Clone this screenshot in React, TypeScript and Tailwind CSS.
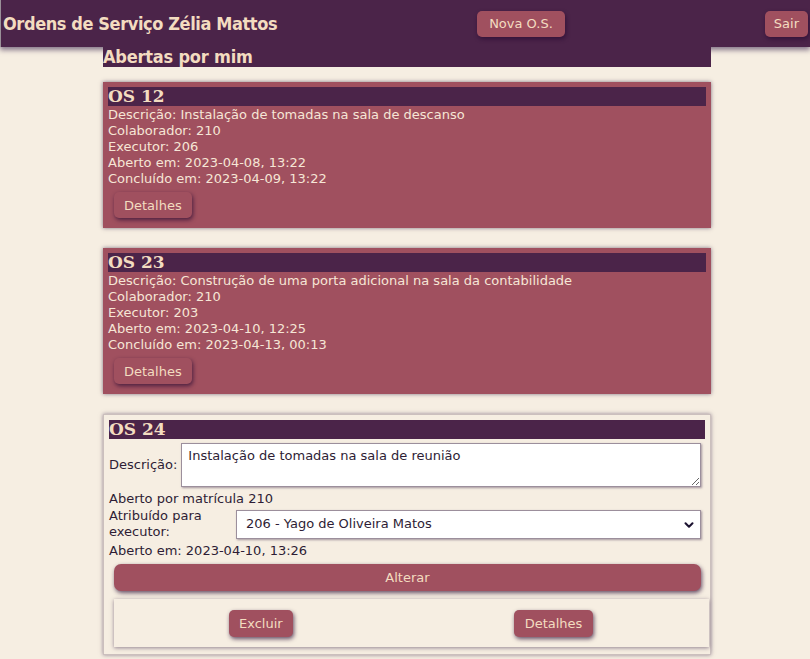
import { ChevronDown } from "lucide-react";

const closed = [
    {
        id: 12,
        descricao: "Instalação de tomadas na sala de descanso",
        colaborador: 210,
        executor: 206,
        aberto: "2023-04-08, 13:22",
        concluido: "2023-04-09, 13:22"
    },
    {
        id: 23,
        descricao: "Construção de uma porta adicional na sala da contabilidade",
        colaborador: 210,
        executor: 203,
        aberto: "2023-04-10, 12:25",
        concluido: "2023-04-13, 00:13"
    }
];

const btn =
    "bg-[#a0505f] text-[#f3dcc0] rounded-[5px] shadow-[1px_2px_4px_rgba(40,10,50,0.7)] text-[13px] leading-none";

const narrow = "font-['DejaVu_Sans_Condensed','DejaVu_Sans',sans-serif] font-bold";

export default function App() {
    return (
        <div className="min-h-[659px] bg-[#f6eee2] font-['DejaVu_Sans',Verdana,sans-serif] text-[13px] leading-4">
            <header className="h-[47px] bg-[#4b2449] flex items-center justify-between px-[2px] border-l border-[#9a9098] shadow-[0_3px_5px_rgba(60,40,80,0.6)] relative z-10">
                <h1 className={`${narrow} text-[18px] tracking-[-0.4px] text-[#f3dcc0]`}>Ordens de Serviço Zélia Mattos</h1>
                <button className={`${btn} h-[26px] px-[12px]`}>Nova O.S.</button>
                <button className={`${btn} h-[26px] px-[9px]`}>Sair</button>
            </header>

            <main className="w-[608px] ml-[103px] relative z-20">
                <h2 className={`${narrow} bg-[#4b2449] text-[#f3dcc0] text-[18px] tracking-[-0.2px] leading-5 h-5`}>Abertas por mim</h2>

                <div className="flex flex-col gap-5 mt-[15px]">
                    {closed.map((os) => (
                        <div
                            key={os.id}
                            className="bg-[#a0505f] text-[#f6e6d6] px-[5px] pt-[5px] pb-[10px] shadow-[0_0_4px_rgba(80,60,90,0.7)]"
                        >
                            <div className="bg-[#4b2449] h-[19px] font-['DejaVu_Serif',Georgia,serif] font-bold text-[17px] leading-[19px] text-[#f3dcc0]">
                                OS {os.id}
                            </div>
                            <div className="pt-px">
                                <p>Descrição: {os.descricao}</p>
                                <p>Colaborador: {os.colaborador}</p>
                                <p>Executor: {os.executor}</p>
                                <p>Aberto em: {os.aberto}</p>
                                <p>Concluído em: {os.concluido}</p>
                            </div>
                            <button className={`${btn} h-[26px] px-[10px] ml-[6px] mt-[5px]`}>Detalhes</button>
                        </div>
                    ))}

                    <div className="bg-[#f6eee2] text-[#2e1d35] px-[5px] pt-[5px] pb-[7px] border border-[#cbbfbd] shadow-[0_0_4px_rgba(80,60,90,0.6)]">
                        <div className="bg-[#4b2449] h-[19px] font-['DejaVu_Serif',Georgia,serif] font-bold text-[17px] leading-[19px] text-[#f3dcc0]">
                            OS 24
                        </div>
                        <div className="flex items-center gap-1 mt-1">
                            <span>Descrição:</span>
                            <textarea
                                className="flex-1 h-[44px] bg-white border border-[#9c8f9c] shadow-[1px_1px_2px_rgba(80,60,90,0.5)] px-[6px] py-[4px] text-[13px] leading-4 text-[#2e1d35] mr-[4px] resize-y"
                                defaultValue="Instalação de tomadas na sala de reunião"
                            />
                        </div>
                        <p className="mt-[4px]">Aberto por matrícula 210</p>
                        <div className="flex items-center mt-[1px]">
                            <span className="w-[127px]">Atribuído para executor:</span>
                            <div className="relative flex-1 mr-[4px]">
                                <div className="h-[29px] bg-white border border-[#9c8f9c] shadow-[1px_1px_2px_rgba(80,60,90,0.5)] flex items-center pl-[9px]">
                                    206 - Yago de Oliveira Matos
                                </div>
                                <ChevronDown size={14} strokeWidth={3.5} className="absolute right-[5px] top-[8px] text-[#1c1230]" />
                            </div>
                        </div>
                        <p className="mt-[3px]">Aberto em: 2023-04-10, 13:26</p>
                        <button className={`${btn} w-[587px] h-[27px] ml-[5px] mt-[5px] rounded-[7px]`}>Alterar</button>
                        <div className="ml-[5px] mt-[8px] h-[48px] w-[595px] flex items-center bg-[#f6eee2] shadow-[0_1px_4px_rgba(80,60,90,0.6)]">
                            <button className={`${btn} h-[27px] px-[10px] ml-[115px]`}>Excluir</button>
                            <button className={`${btn} h-[27px] px-[11px] ml-[221px]`}>Detalhes</button>
                        </div>
                    </div>
                </div>
            </main>
        </div>
    );
}
